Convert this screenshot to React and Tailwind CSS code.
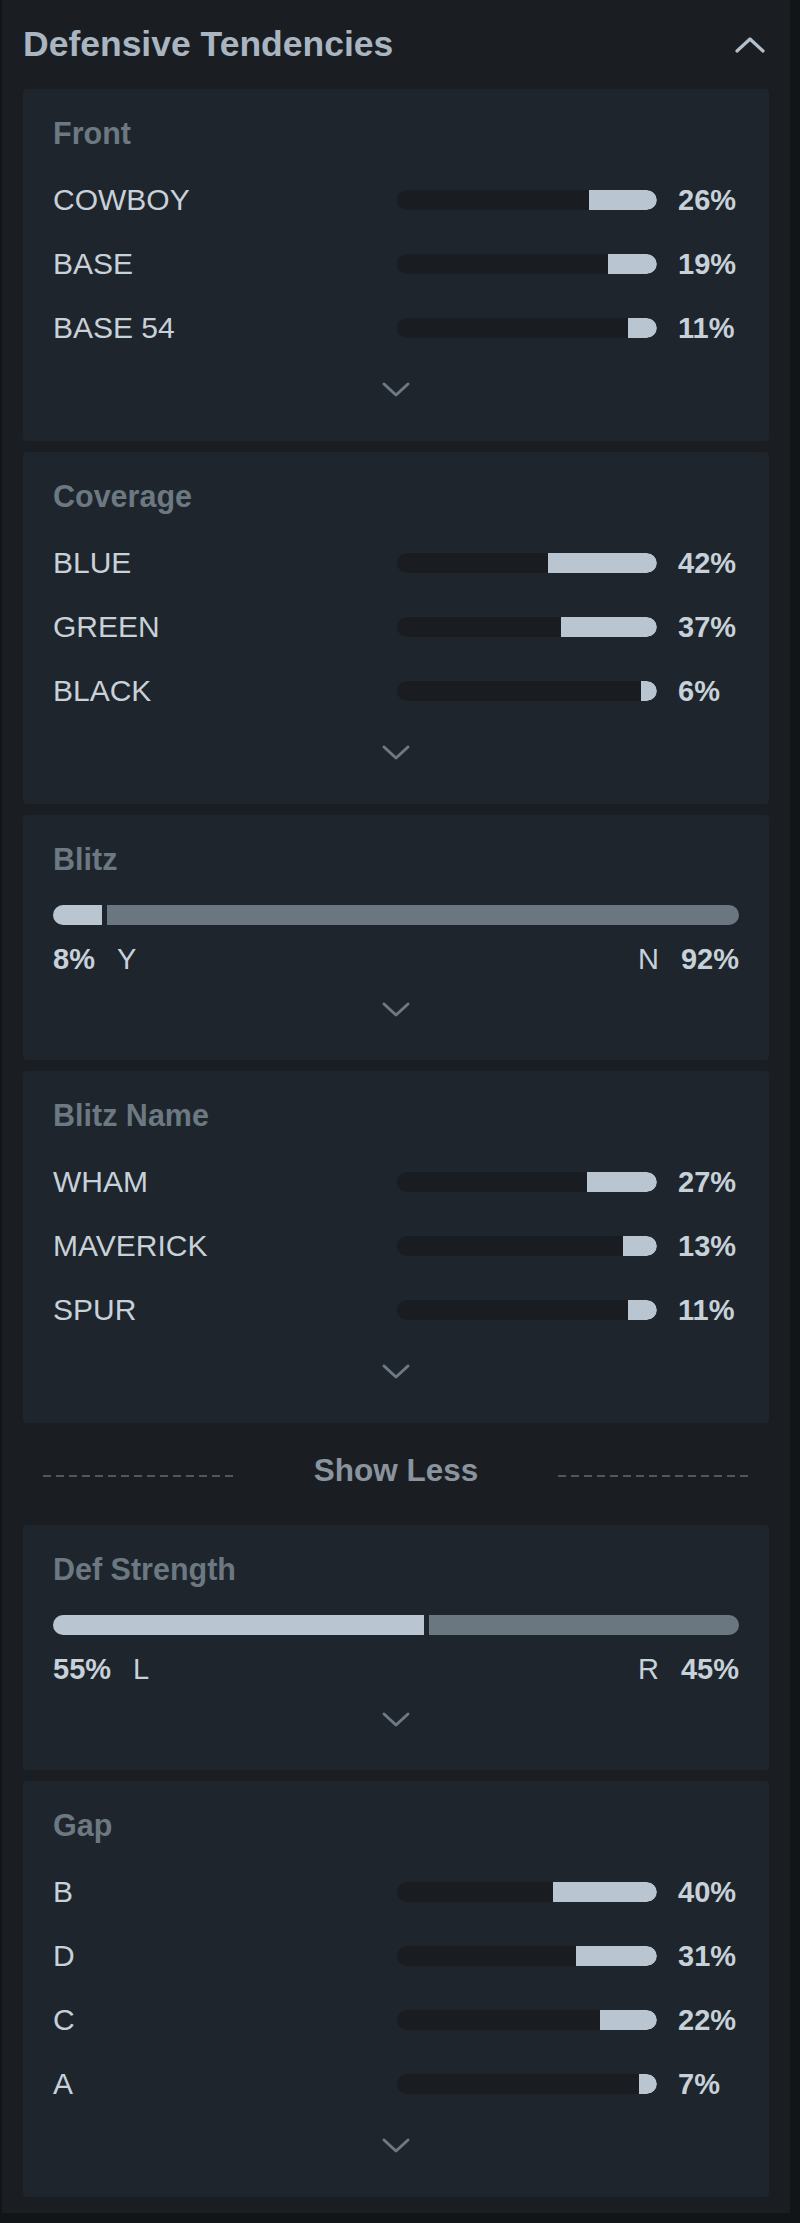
import React from "react"

const front = [
  ["COWBOY", 26],
  ["BASE", 19],
  ["BASE 54", 11],
]
const coverage = [
  ["BLUE", 42],
  ["GREEN", 37],
  ["BLACK", 6],
]
const blitzName = [
  ["WHAM", 27],
  ["MAVERICK", 13],
  ["SPUR", 11],
]
const gaps = [
  ["B", 40],
  ["D", 31],
  ["C", 22],
  ["A", 7],
]

function Chevron({ up }) {
  return up ? (
    <svg width="32" height="18" viewBox="0 0 32 18" fill="none">
      <polyline points="3,15 16,3 29,15" stroke="#b3bfca" strokeWidth="3.2" strokeLinecap="round" strokeLinejoin="round" />
    </svg>
  ) : (
    <svg width="30" height="17" viewBox="0 0 30 17" fill="none">
      <polyline points="3,3 15,14 27,3" stroke="#6d7984" strokeWidth="3" strokeLinecap="round" strokeLinejoin="round" />
    </svg>
  )
}

function Card({ title, children, bottom = "pb-[23px]" }) {
  return (
    <div className={`rounded-[4px] bg-[#1f252c] px-[30px] pt-[24px] ${bottom}`}>
      <div className="h-[40px] text-[30.5px] font-bold leading-[40px] text-[#6c7882]">{title}</div>
      {children}
      <div className="flex h-[58px] items-center justify-center">
        <Chevron />
      </div>
    </div>
  )
}

function BarRow({ label, pct }) {
  return (
    <div className="flex h-[64px] items-center">
      <span className="flex-1 text-[30px] leading-[36px] text-[#c7d1da]">{label}</span>
      <div className="flex h-[20px] w-[260px] justify-end overflow-hidden rounded-full bg-[#191d21]">
        <div className="h-full rounded-r-full bg-[#b9c6d1]" style={{ width: `${pct}%` }} />
      </div>
      <span className="ml-[21px] w-[61px] text-[29px] font-bold leading-[36px] text-[#c7d1da]">{pct}%</span>
    </div>
  )
}

function BarCard({ title, rows }) {
  return (
    <Card title={title}>
      <div className="mt-[15px]">
        {rows.map(([label, pct]) => (
          <BarRow key={label} label={label} pct={pct} />
        ))}
      </div>
    </Card>
  )
}

function SplitCard({ title, left, right, leftLabel, rightLabel }) {
  return (
    <Card title={title} bottom="pb-[22px]">
      <div className="mt-[26px] flex h-[20px] gap-[5px]">
        <div className="h-full rounded-l-full bg-[#b9c6d1]" style={{ width: `calc(${left}% - 6px)` }} />
        <div className="h-full flex-1 rounded-r-full bg-[#6a7680]" />
      </div>
      <div className="mt-[16px] flex h-[36px] items-baseline text-[29px] leading-[36px] text-[#c7d1da]">
        <span className="font-bold">{left}%</span>
        <span className="ml-[22px]">{leftLabel}</span>
        <span className="ml-auto">{rightLabel}</span>
        <span className="ml-[22px] font-bold">{right}%</span>
      </div>
      <div className="h-[3px]" />
    </Card>
  )
}

function ShowLess() {
  return (
    <div className="flex h-[80px] items-center px-[20px] pb-[7px]">
      <div className="mt-[10px] h-[2px] flex-1 bg-[repeating-linear-gradient(90deg,#4d5861_0px,#4d5861_8px,transparent_8px,transparent_13px)]" />
      <span className="mx-[80px] text-[31.5px] font-bold text-[#8a949e]">Show Less</span>
      <div className="mt-[10px] h-[2px] flex-1 bg-[repeating-linear-gradient(90deg,#4d5861_0px,#4d5861_8px,transparent_8px,transparent_13px)]" />
    </div>
  )
}

export default function App() {
  return (
    <div className="min-h-screen bg-[#121518] font-['Liberation_Sans',Arial,sans-serif]">
      <div className="ml-[2px] w-[788px] bg-[#1a1e22] px-[21px] pt-[20px] pb-[16px]">
        <div className="mb-[19px] flex h-[50px] items-center justify-between pr-[3px]">
          <h2 className="text-[35.5px] font-bold text-[#a9b5c1]">Defensive Tendencies</h2>
          <Chevron up />
        </div>
        <div className="flex flex-col gap-[11px]">
          <BarCard title="Front" rows={front} />
          <BarCard title="Coverage" rows={coverage} />
          <SplitCard title="Blitz" left={8} right={92} leftLabel="Y" rightLabel="N" />
          <BarCard title="Blitz Name" rows={blitzName} />
          <ShowLess />
          <SplitCard title="Def Strength" left={55} right={45} leftLabel="L" rightLabel="R" />
          <BarCard title="Gap" rows={gaps} />
        </div>
      </div>
    </div>
  )
}
